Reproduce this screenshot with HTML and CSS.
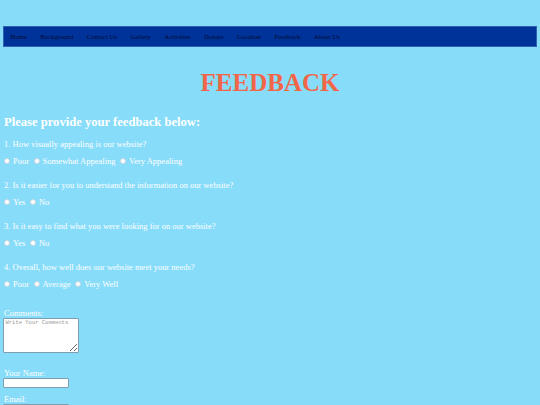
FILE: index.html
```html
<!DOCTYPE html>
<html lang="en">
<head>
<meta charset="utf-8">
<title>Feedback</title>
<link rel="stylesheet" href="styles.css">
</head>
<body>
<nav class="nav">
  <a class="nav-link" href="#">Home</a>
  <a class="nav-link" href="#">Background</a>
  <a class="nav-link" href="#">Contact Us</a>
  <a class="nav-link" href="#">Gallery</a>
  <a class="nav-link" href="#">Activities</a>
  <a class="nav-link" href="#">Donate</a>
  <a class="nav-link" href="#">Location</a>
  <a class="nav-link" href="#">Feedback</a>
  <a class="nav-link" href="#">About Us</a>
</nav>
<h1 class="title">FEEDBACK</h1>
<form class="form">
  <h2 class="subtitle">Please provide your feedback below:</h2>

  <div class="question">
    <p class="q-text">1. How visually appealing is our website?</p>
    <div class="options">
      <label class="option"><input class="radio" type="radio" name="q1"><span>Poor</span></label>
      <label class="option"><input class="radio" type="radio" name="q1"><span>Somewhat Appealing</span></label>
      <label class="option"><input class="radio" type="radio" name="q1"><span>Very Appealing</span></label>
    </div>
  </div>

  <div class="question">
    <p class="q-text">2. Is it easier for you to understand the information on our website?</p>
    <div class="options">
      <label class="option"><input class="radio" type="radio" name="q2"><span>Yes</span></label>
      <label class="option"><input class="radio" type="radio" name="q2"><span>No</span></label>
    </div>
  </div>

  <div class="question">
    <p class="q-text">3. Is it easy to find what you were looking for on our website?</p>
    <div class="options">
      <label class="option"><input class="radio" type="radio" name="q3"><span>Yes</span></label>
      <label class="option"><input class="radio" type="radio" name="q3"><span>No</span></label>
    </div>
  </div>

  <div class="question">
    <p class="q-text">4. Overall, how well does our website meet your needs?</p>
    <div class="options">
      <label class="option"><input class="radio" type="radio" name="q4"><span>Poor</span></label>
      <label class="option"><input class="radio" type="radio" name="q4"><span>Average</span></label>
      <label class="option"><input class="radio" type="radio" name="q4"><span>Very Well</span></label>
    </div>
  </div>

  <div class="field field-comments">
    <label class="field-label" for="comments">Comments:</label>
    <textarea class="textarea" id="comments" placeholder="Write Your Comments"></textarea>
  </div>

  <div class="field field-name">
    <label class="field-label" for="name">Your Name:</label>
    <input class="text-input" id="name" type="text">
  </div>

  <div class="field field-email">
    <label class="field-label" for="email">Email:</label>
    <input class="text-input" id="email" type="email">
  </div>
</form>
</body>
</html>
```

FILE: styles.css
```css
html, body {
  margin: 0;
  padding: 0;
}

body {
  background: #87dcfa;
  font-family: "Liberation Serif", "Times New Roman", serif;
  color: #ffffff;
  padding: 26px 3px 0;
  overflow: hidden;
}

.nav {
  display: flex;
  gap: 13.5px;
  height: 19px;
  align-items: center;
  padding-left: 6.3px;
  background: #003399;
  border: 1px solid #2f62b3;
}

.nav-link {
  font-size: 6.75px;
  line-height: 19px;
  color: #000a33;
  text-decoration: none;
}

.title {
  margin: 22px 0 0;
  text-align: center;
  font-size: 25px;
  line-height: 28px;
  font-weight: bold;
  color: #f26648;
}

.form {
  display: block;
}

.subtitle {
  margin: 18px 0 0 1px;
  font-size: 12.6px;
  line-height: 15px;
  font-weight: bold;
  color: #ffffff;
}

.question {
  margin-top: 9px;
}

.question + .question {
  margin-top: 14px;
}

.q-text {
  margin: 0 0 0 1px;
  font-size: 8.5px;
  line-height: 10px;
}

.options {
  display: flex;
  align-items: center;
  gap: 3.5px;
  height: 10px;
  margin-top: 7px;
}

.option {
  display: flex;
  align-items: center;
  font-size: 8.5px;
  line-height: 10px;
}

.radio {
  appearance: none;
  -webkit-appearance: none;
  width: 6px;
  height: 6px;
  margin: 0 3px 0 1px;
  border-radius: 50%;
  background: #ffffff;
  border: 0.5px solid #c9d6dd;
  box-sizing: border-box;
}

.field-label {
  display: block;
  margin-left: 1px;
  font-size: 8.5px;
  line-height: 10px;
}

.field-comments {
  margin-top: 19px;
}

.field-name {
  margin-top: 15px;
}

.field-email {
  margin-top: 6px;
}

.textarea {
  display: block;
  box-sizing: border-box;
  width: 76px;
  height: 35px;
  margin: 0;
  padding: 1px 1.5px;
  border: 1px solid #7f9fb0;
  border-radius: 1px;
  background: #ffffff;
  font-family: "Liberation Mono", "Courier New", monospace;
  font-size: 5.5px;
  line-height: 6px;
  resize: both;
}

.textarea::placeholder {
  color: #9a9a9a;
}

.text-input {
  display: block;
  box-sizing: border-box;
  width: 66px;
  height: 10px;
  margin: 0;
  padding: 0 1px;
  border: 1px solid #7f9fb0;
  border-radius: 1px;
  background: #ffffff;
  font-size: 6px;
}
```
